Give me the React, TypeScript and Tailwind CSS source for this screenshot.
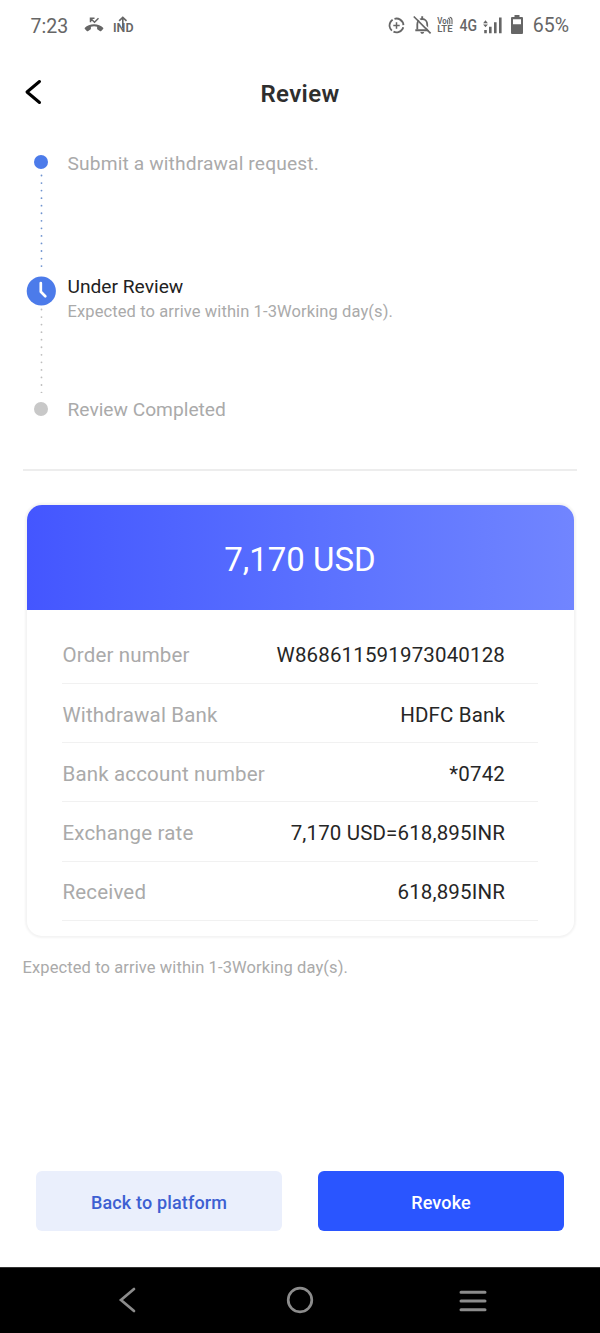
import React from 'react';

const details = [
    { label: 'Order number', value: 'W868611591973040128' },
    { label: 'Withdrawal Bank', value: 'HDFC Bank' },
    { label: 'Bank account number', value: '*0742' },
    { label: 'Exchange rate', value: '7,170 USD=618,895INR' },
    { label: 'Received', value: '618,895INR' },
];

const StatusBar = () => (
    <div className="h-[52px] flex items-center justify-between pl-[30.5px] pr-[31px] text-[#666666]">
        <div className="flex items-center">
            <span className="w-[53px] pt-0.5 text-[19.5px] leading-none">7:23</span>
            {/* Missed call */}
            <svg width="20" height="16" viewBox="0 0 20 16" fill="none" className="mr-[9px] -mt-0.5">
                <path d="M10 7.2C6.2 7.2 3 8.5.9 10.7c-.4.4-.4 1 0 1.4l1.9 1.9c.4.4 1 .4 1.4.1l2.2-1.5c.3-.2.5-.5.5-.9V9.8c2-.7 4.300-.7 6.200 0v1.900c0 .4.2.7.5.9l2.200 1.500c.4.3 1 .3 1.400-.1l1.900-1.900c.4-.4.4-1 0-1.400C17 8.500 13.800 7.200 10 7.200Z" fill="currentColor" />
                <path d="M6.500 5.200V1.300h4M6.700 1.500l3.800 3.700 4-4" stroke="currentColor" strokeWidth="1.5" />
            </svg>
            <svg width="21" height="18" viewBox="0 0 21 18" fill="none" className="-mt-0.5">
                <text x="0" y="15.8" fontSize="13.5" fontWeight="600" fill="currentColor" textLength="20.5" lengthAdjust="spacingAndGlyphs">IND</text>
                <path d="M9.800 12V2M6.100 4.800 9.800 1.300l3.700 3.500" stroke="currentColor" strokeWidth="1.6" />
            </svg>
        </div>
        <div className="flex items-center">
            {/* Data saver */}
            <svg width="17" height="17" viewBox="0 0 17 17" fill="none" className="mr-[8px] -mt-0.5">
                <circle cx="8.5" cy="8.5" r="6.9" stroke="currentColor" strokeWidth="1.9" strokeDasharray="12.45 2" strokeDashoffset="-12" transform="rotate(32 8.5 8.5)" />
                <path d="M8.500 5.300v6.400M5.300 8.500h6.400" stroke="currentColor" strokeWidth="1.5" />
            </svg>
            {/* Muted bell */}
            <svg width="19" height="20" viewBox="0 0 19 20" fill="none" className="mr-[5px] -mt-0.5">
                <path d="M4.300 14.500V9.300C4.300 6.300 6.300 4 9.200 4s5 2.300 5 5.300v5.200" stroke="currentColor" strokeWidth="1.8" />
                <path d="M2.300 15.200h13.400M9.200 1.200v3" stroke="currentColor" strokeWidth="1.9" />
                <path d="M7.400 16.900h3.700c0 1-.8 1.900-1.850 1.900s-1.850-.9-1.850-1.900Z" fill="currentColor" />
                <path d="m1.900.3 16.500 16.500" stroke="white" strokeWidth="1.5" />
                <path d="m.8 1.500 16.800 16.800" stroke="currentColor" strokeWidth="1.7" />
            </svg>
            <svg width="16" height="20" viewBox="0 0 16 20" fill="none" className="mr-[6px] -mt-0.5">
                <text x="0.3" y="9.2" fontSize="9" fontWeight="600" fill="currentColor" textLength="9.5" lengthAdjust="spacingAndGlyphs">Vo</text>
                <path d="M10.700 9.200V4.400M12.800 9.200V5.200c0-1-.6-1.800-1.800-2.200M15 9.200V5C15 3.600 14 2.500 12.600 2.300" stroke="currentColor" strokeWidth="1.1" />
                <text x="0.3" y="17.2" fontSize="9.5" fontWeight="600" fill="currentColor" textLength="15.2" lengthAdjust="spacingAndGlyphs">LTE</text>
            </svg>
            <svg width="20" height="20" viewBox="0 0 20 20" className="mr-[4px] -mt-0.5">
                <text x="0.5" y="16" fontSize="17" fontWeight="500" fill="currentColor" textLength="17.5" lengthAdjust="spacingAndGlyphs">4G</text>
            </svg>
            <svg width="19" height="17" viewBox="0 0 19 17" fill="currentColor" className="mr-[9px] -mt-0.5">
                <path d="M2.500 3.300 4.900 6.300H.1ZM2.500 10.300.1 7.500h4.800Z" />
                <path d="M1.200 13h2.600v3.300H1.200ZM6 9.800h2.600v6.500H6ZM11 5.300h2.600v11H11ZM16 .5h2.600v15.800H16Z" />
            </svg>
            <svg width="12" height="19" viewBox="0 0 12 19" fill="currentColor" className="mr-[9.5px] -mt-[3px]">
                <path fillRule="evenodd" d="M3.500 0h5v2H11q1 0 1 1v15q0 1-1 1H1q-1 0-1-1V3q0-1 1-1h2.500ZM2 4.200v5h8v-5Z" />
            </svg>
            <span className="text-[19.5px] leading-none">65%</span>
        </div>
    </div>
);

const DottedLine = ({ className }: { className: string }) => (
    <svg width="4" className={`flex-1 ${className}`}>
        <line x1="2.5" y1="1.5" x2="2.5" y2="100%" stroke="currentColor" strokeWidth="1.8" strokeLinecap="round" strokeDasharray="0 7.55" />
    </svg>
);

const Timeline = () => (
    <div className="h-[270px] flex ml-[26px] pt-[3px]">
        <div className="w-[30px] h-[261px] flex flex-col items-center">
            <span className="size-[14px] shrink-0 rounded-full bg-[#4c7bea]"></span>
            <div className="h-[107px] flex pt-[5px] pb-[6px]">
                <DottedLine className="h-full text-[#6f93cf]" />
            </div>
            <svg width="30" height="30" viewBox="0 0 30 30" fill="none" className="shrink-0">
                <circle cx="15.3" cy="15" r="14.6" fill="#4c7bea" />
                <path d="M14.800 7v8.800l4.500 4.400" stroke="white" strokeWidth="2.7" strokeLinecap="round" strokeLinejoin="round" />
            </svg>
            <div className="h-[96px] flex pt-[2px] pb-[9px]">
                <DottedLine className="h-full text-[#bdbdbd]" />
            </div>
            <span className="size-[14px] shrink-0 rounded-full bg-[#c8c8c8]"></span>
        </div>
        <div className="flex flex-col pl-[11.5px] -mt-[3px] text-[#aaaaaa]">
            <p className="h-[123px] text-[19.2px] leading-6 tracking-[0.14px]">Submit a withdrawal request.</p>
            <div className="h-[124px]">
                <p className="text-[19.2px] leading-6 text-[#222222]">Under Review</p>
                <p className="text-[16.5px] leading-[26px] tracking-[0.1px]">Expected to arrive within 1-3Working day(s).</p>
            </div>
            <p className="text-[19.2px] leading-6">Review Completed</p>
        </div>
    </div>
);

const OrderCard = () => (
    <div className="mx-[26.5px] mt-[34px] h-[431px] rounded-[15px] bg-white shadow-[0_0_2px_2px_#f4f4f4] overflow-hidden">
        <div className="h-[105px] flex items-center justify-center bg-gradient-to-r from-[#4456ff] to-[#7185ff] pt-1.5 text-white text-[33px]">
            7,170 USD
        </div>
        <div className="pt-[15px] px-[35.5px]">
            {details.map((item) => (
                <div key={item.label} className="h-[59.25px] flex items-center justify-between border-b border-[#f1f1f1] pl-[0.5px] pr-[33px] pt-[4px] text-[20.5px]">
                    <span className="text-[#aaaaaa] tracking-[0.16px]">{item.label}</span>
                    <span className="text-[#262626] tracking-[0.15px]">{item.value}</span>
                </div>
            ))}
        </div>
    </div>
);

const NavBar = () => (
    <div className="h-[66px] shrink-0 flex items-center justify-between bg-black border-t border-[#333333] pl-[118px] pr-[113px] text-[#8c8c8c]">
        <svg width="22" height="26" viewBox="0 0 22 26" fill="none" className="-mt-0.5">
            <path d="M16 2 3 13l13 11" stroke="currentColor" strokeWidth="2.7" strokeLinecap="round" />
        </svg>
        <svg width="28" height="28" viewBox="0 0 28 28" fill="none" className="-mt-0.5">
            <circle cx="14" cy="14" r="11.8" stroke="currentColor" strokeWidth="2.7" />
        </svg>
        <svg width="28" height="22" viewBox="0 0 28 22" fill="none">
            <path d="M2 2.300h24M2 11h24M2 19.700h24" stroke="currentColor" strokeWidth="3" strokeLinecap="round" />
        </svg>
    </div>
);

export default function App() {
    return (
        <div className="w-[600px] h-[1333px] flex flex-col bg-white overflow-hidden font-['Roboto',sans-serif]">
            <StatusBar />

            {/* Title bar */}
            <header className="h-[100px] grid grid-cols-[60px_1fr_60px] pt-[26px]">
                <button className="h-[28px] flex items-center pl-[24px]">
                    <svg width="18" height="26" viewBox="0 0 18 26" fill="none">
                        <path d="M15.500 2.500 3 13l12.500 10.500" stroke="black" strokeWidth="3" strokeLinecap="round" strokeLinejoin="round" />
                    </svg>
                </button>
                <h1 className="pt-px text-center text-[24px] leading-[30px] font-semibold tracking-[0.35px] text-[#2e2e2e]">Review</h1>
            </header>

            <Timeline />
            <div className="mx-[23px] mt-[47px] h-[1.5px] shrink-0 bg-[#ededed]"></div>
            <OrderCard />
            <p className="mt-[20px] ml-[22.5px] text-[16.5px] leading-6 tracking-[0.1px] text-[#aaaaaa]">Expected to arrive within 1-3Working day(s).</p>

            <div className="mt-auto mb-[36px] px-[36px] grid grid-cols-2 gap-[36px] text-[18px] font-medium tracking-[0.15px]">
                <button className="h-[60px] rounded-[6px] bg-[#eaeffc] pt-0.5 text-[#3d5fd2]">Back to platform</button>
                <button className="h-[60px] rounded-[6px] bg-[#2a55ff] pt-0.5 text-white">Revoke</button>
            </div>
            <NavBar />
        </div>
    );
}
